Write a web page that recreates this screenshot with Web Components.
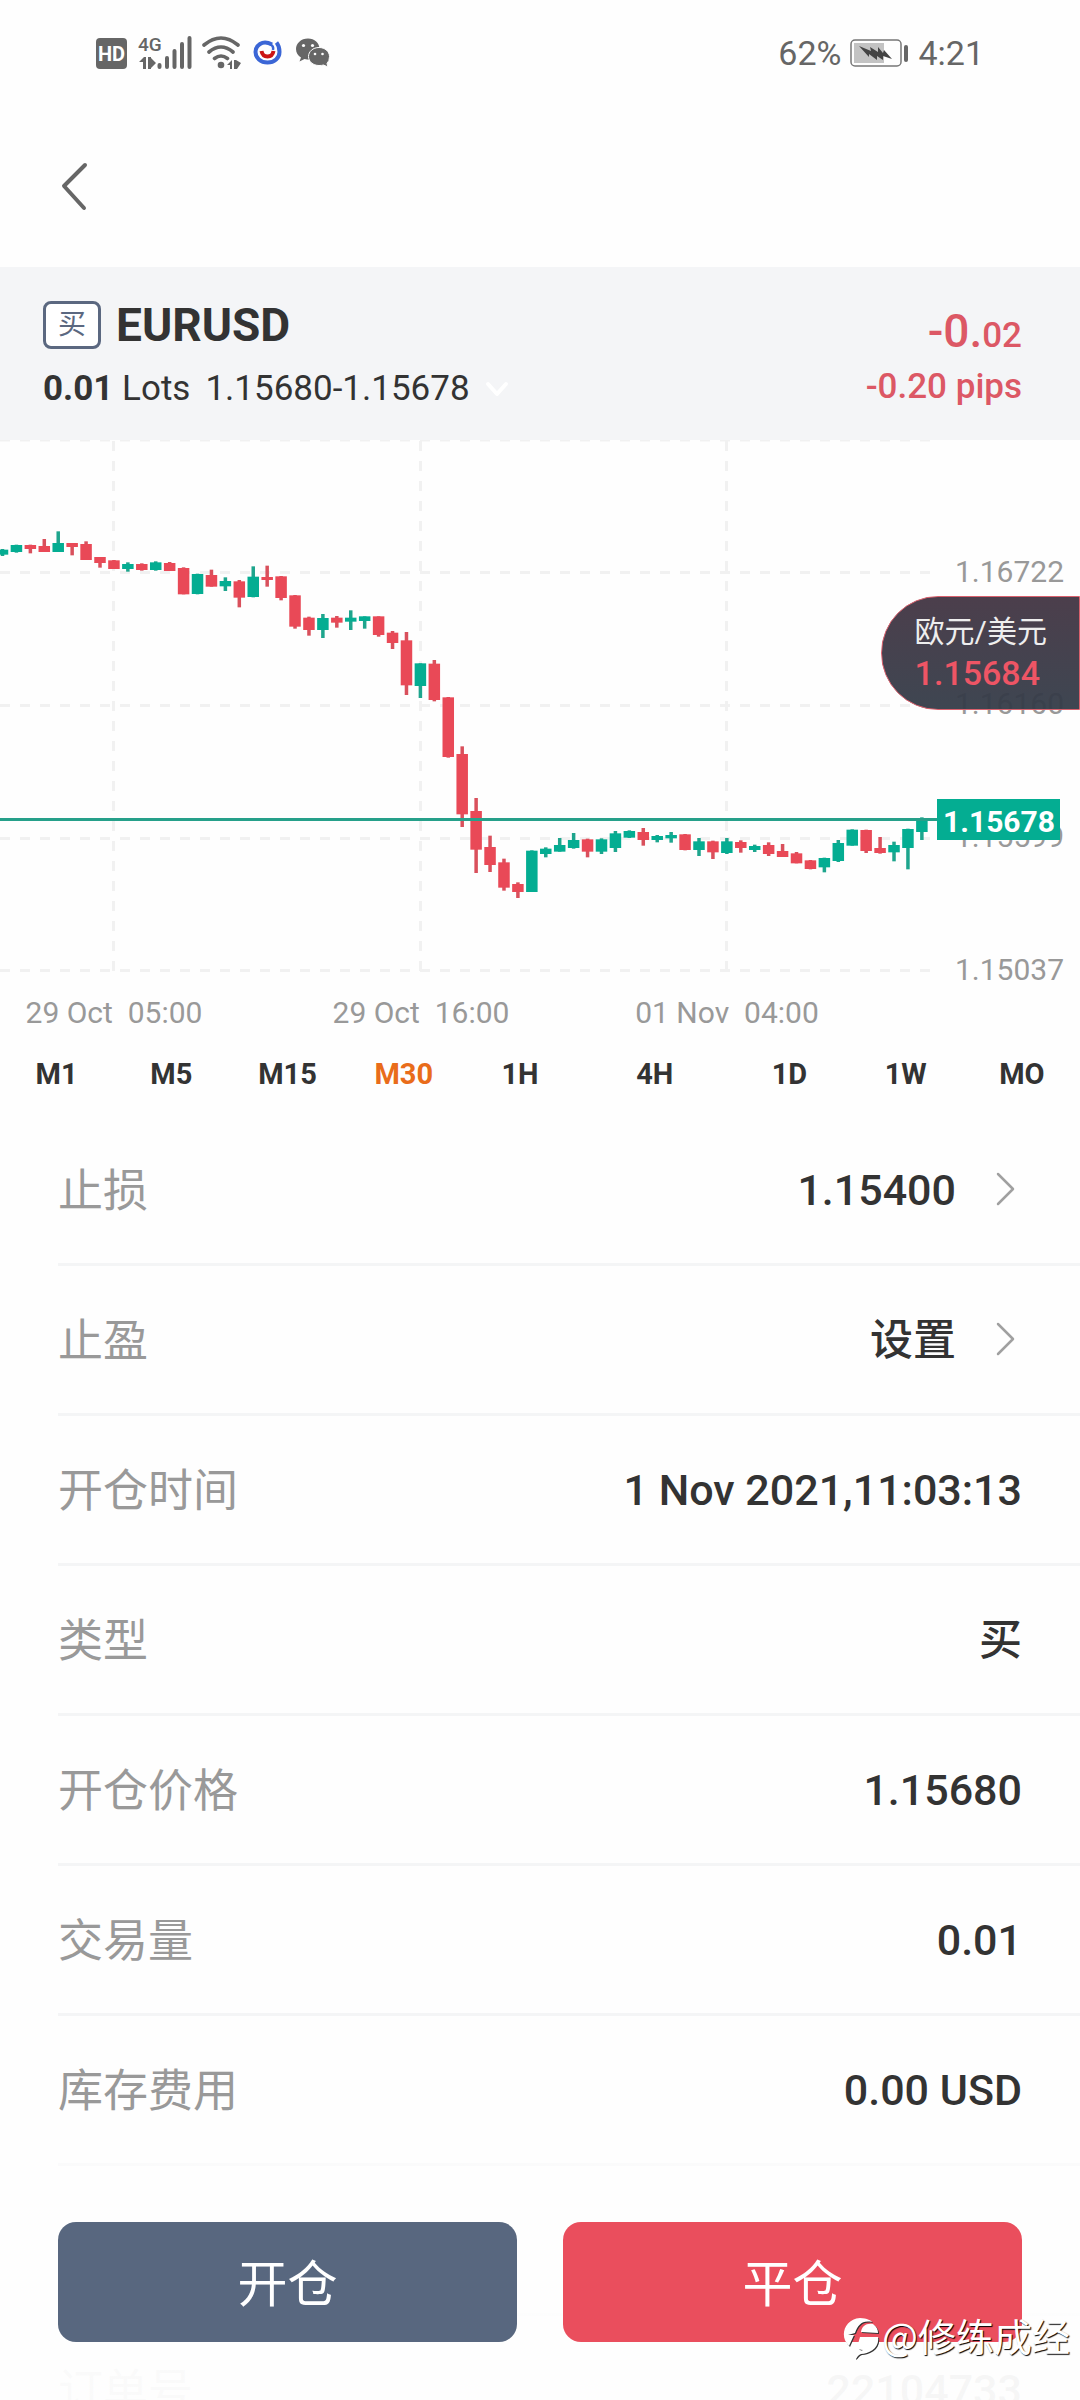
<!DOCTYPE html>
<html lang="zh-CN">
<head>
<meta charset="utf-8">
<meta name="viewport" content="width=device-width, initial-scale=1">
<title>EURUSD</title>
<style>
  html, body { margin: 0; height: 100%; }
  body {
    background: #fefefe; color: #333; overflow: hidden;
    font-family: Roboto, "Noto Sans CJK SC", sans-serif;
  }
</style>
</head>
<body>
<position-page></position-page>

<template id="status-bar">
  <style>
    :host { box-sizing: border-box; display: flex; align-items: center; justify-content: space-between; height: 107px; padding: 0 96px 2px 95px; color: #666; font-size: 34px; line-height: 40px; }
    div { display: flex; align-items: center; gap: 9px; }
    svg { display: block; fill: #666; }
  </style>
  <div>
    <svg width="236" height="36" viewBox="95 35 236 36" font-family="Roboto, sans-serif">
      <rect x="96" y="38" width="31" height="31" rx="4"/>
      <text x="111.5" y="60.500" font-size="20" font-weight="700" fill="#fff" text-anchor="middle">HD</text>
      <text x="138" y="51" font-size="19" font-weight="500" font-family="Roboto, sans-serif">4G</text>
      <path d="M139 62l5-5h2v12h-3v-7zM148 57h3v12h-3zM151 58l5 5-5 5z"/>
      <g stroke="#666" stroke-width="4" stroke-linecap="round">
        <path d="M159.500 65v2M167 58v9M174.500 51v16M182 44v23M189.500 38v29"/>
      </g>
      <g fill="none" stroke="#666" stroke-width="3.600" stroke-linecap="round">
        <path d="M204 45q17-14 34 0M209 52q12-10 24 0M214.500 58.500q6.500-5 13 0"/>
      </g>
      <circle cx="221" cy="65" r="3.300"/>
      <path d="M227 65l5-5v9h-2v-4zM234 60h2v9h-2zM236 60l5 3-4 6h-1z"/>
      <g fill="none" stroke="#3b66d6" stroke-width="4">
        <path d="M272 44.500C262 39 255.500 46 255.500 52s5 10.500 12 10.500 12-4.500 12-10.500q0-6-3-9.500"/>
        <path d="M270 44q4 2 3 6" stroke-width="2.500"/>
        <path d="M261.500 51q1 5.500 6 5.500t6-5.500" stroke="#cb1414"/>
      </g>
      <path d="M308 38.500c-7 0-12 5-12 10.500 0 4 2 6.500 5 8.500l-1.500 4 5-2.500q4 1 7 .5c6-1 8-6 8-10.500 0-6-5-10.500-11.500-10.500z"/>
      <path d="M319 47.500c-6 0-10.500 4-10.500 9s4.500 9 10.500 9q3 0 4.500-.5l4.500 2-1-3.500q2.500-2.500 2.500-7c0-5-4.500-9-10.500-9z" stroke="#fefefe" stroke-width="1"/>
      <g fill="#fefefe"><circle cx="303.500" cy="45.500" r="1.600"/><circle cx="312.500" cy="45.500" r="1.600"/><circle cx="315" cy="54" r="1.300"/><circle cx="322.500" cy="54" r="1.300"/></g>
    </svg>
  </div>
  <div>
    <span>62%</span>
    <svg width="59" height="28" viewBox="0 0 59 28">
      <rect x="1" y="1" width="50" height="26" rx="4" fill="none" stroke="#777" stroke-width="1.500"/>
      <path d="M4 4h30v20H4z" fill="#c3c3c3"/>
      <path d="M9 7l12 5-1-4 8 5v-5l5 6 1-3 8 9-9-3v4l-6-4v4l-8-6v3z" fill="#444"/>
      <rect x="54" y="6" width="4" height="17" rx="2"/>
    </svg>
    <span>4:21</span>
  </div>
</template>

<template id="nav-bar">
  <style>
    :host { display: flex; align-items: center; height: 160px; padding: 0 48px; }
    button { border: 0; background: none; padding: 12px; cursor: pointer; }
    svg { display: block; }
  </style>
  <button type="button" aria-label="返回">
    <svg width="30" height="50" viewBox="0 0 30 50" fill="none" stroke="#666" stroke-width="4" stroke-linecap="round" stroke-linejoin="round"><path d="M25 3L4 24l20 22"/></svg>
  </button>
</template>

<template id="position-header">
  <style>
    :host { display: flex; justify-content: space-between; background: #f4f5f7; padding: 34px 58px 31px 43px; }
    .left { display: flex; flex-direction: column; gap: 20px; }
    .right { display: flex; flex-direction: column; gap: 12px; padding-top: 6px; text-align: right; color: #dc5865; font-weight: 500; }
    .name { display: flex; align-items: center; gap: 15px; height: 48px; }
    .side { box-sizing: border-box; width: 58px; height: 48px; border: 3px solid #5b6880; border-radius: 8px; background: #fff; color: #5b6880; font-size: 28px; line-height: 42px; text-align: center; }
    h1 { margin: 0; font-size: 46px; line-height: 48px; font-weight: 700; }
    .lots { display: flex; align-items: center; height: 40px; font-size: 35px; line-height: 40px; gap: 15px; white-space: nowrap; }
    .pl { height: 48px; font-size: 46px; line-height: 48px; }
    .pl small { font-size: 35px; line-height: 40px; }
    .pips { font-size: 35px; line-height: 40px; }
    svg { display: block; }
  </style>
  <div class="left">
    <div class="name"><span class="side">买</span><h1>EURUSD</h1></div>
    <div class="lots"><span><b>0.01</b> Lots</span><span>1.15680-1.15678</span>
      <svg width="24" height="18" viewBox="0 0 24 18" fill="none" stroke="#fff" stroke-width="4" stroke-linecap="round" stroke-linejoin="round"><path d="M3 4l9 10 9-10"/></svg></div>
  </div>
  <div class="right">
    <div class="pl">-0.<small>02</small></div>
    <div class="pips">-0.20 pips</div>
  </div>
</template>

<template id="price-chart">
  <style>
    :host { display: block; position: relative; }
    svg { display: block; width: 100%; height: auto; }
    .axis { font-size: 30px; fill: #999; }
    .pill {
      position: absolute; right: 0; top: 156px; box-sizing: border-box; padding: 16px 32px 14px 33px;
      border: 1px solid #d9606c; border-radius: 57px 0 0 57px;
      background: linear-gradient(rgba(66,52,66,.95), rgba(52,60,72,.95));
      color: #eee; font-size: 30px; line-height: 38px;
    }
    .pill strong { display: block; font-size: 34px; line-height: 44px; font-weight: 500; color: #ee5565; }
  </style>
  <svg viewBox="0 0 1080 592" role="img" aria-label="EURUSD M30">
    <g stroke="#f1f1f1" stroke-width="3" stroke-dasharray="10 10">
      <path d="M0 0H930M0 132.500H930M0 265.500H930M0 398.500H930M0 530.500H930M113.500 1V532M420.500 1V532M726.500 1V532"/>
    </g>
    <g class="axis" text-anchor="end">
      <text x="1064" y="142">1.16722</text>
      <text x="1064" y="274">1.16160</text>
      <text x="1064" y="407">1.15599</text>
      <text x="1064" y="540">1.15037</text>
    </g>
    <g id="candles"></g>
    <path d="M0 379.500H938" stroke="#26a08a" stroke-width="3"/>
    <rect x="937" y="359" width="123" height="41" fill="#04ad92"/>
    <text x="999" y="392" font-size="30" font-weight="700" fill="#fff" text-anchor="middle">1.15678</text>
    <g class="axis" text-anchor="middle">
      <text x="114" y="583">29 Oct&#160; 05:00</text>
      <text x="421" y="583">29 Oct&#160; 16:00</text>
      <text x="727" y="583">01 Nov&#160; 04:00</text>
    </g>
  </svg>
  <div class="pill">欧元/美元<strong>1.15684</strong></div>
</template>

<template id="period-tabs">
  <style>
    :host { display: grid; grid-template-columns: 113fr repeat(4, 116fr) 153fr repeat(3, 116fr); height: 84px; }
    button { border: 0; padding: 0; background: none; color: #333; font: 700 29px/40px Roboto, sans-serif; cursor: pointer; }
    button[aria-pressed="true"] { color: #e96c1a; }
  </style>
</template>

<template id="detail-row">
  <style>
    :host { display: flex; align-items: center; justify-content: space-between; box-sizing: border-box; height: 150px; margin-left: 58px; padding-right: 58px; border-bottom: 3px solid #f4f5f6; line-height: 60px; }
    .label { padding-top: 4px; color: #999; font-size: 45px; }
    .value { display: flex; align-items: center; gap: 38px; color: #333; font-size: 43px; font-weight: 500; }
    svg { display: none; }
    :host([link]) svg { display: block; }
  </style>
  <span class="label"><slot name="label"></slot></span>
  <span class="value"><slot></slot>
    <svg width="28" height="36" viewBox="0 0 28 36" fill="none" stroke="#a0a0a0" stroke-width="2.500" stroke-linecap="round" stroke-linejoin="round"><path d="M4 2l15 15L4 32"/></svg>
  </span>
</template>

<template id="action-bar">
  <style>
    :host { position: absolute; left: 0; right: 0; bottom: 0; display: flex; gap: 46px; padding: 92px 58px 58px; background: linear-gradient(rgba(254,254,254,0), rgba(254,254,254,.6) 30px, rgba(254,254,254,.96) 220px); }
    button { flex: 1; height: 120px; padding: 6px 0 0; border: 0; border-radius: 18px; background: #58677f; color: #fff; font: 400 50px/60px Roboto, "Noto Sans CJK SC", sans-serif; cursor: pointer; }
    .close { background: #ea4e5d; }
  </style>
  <button type="button">开仓</button>
  <button type="button" class="close">平仓</button>
</template>

<template id="user-mark">
  <style>
    :host { position: absolute; right: 10px; bottom: 40px; display: flex; align-items: center; gap: 2px; color: #fff; font: 400 38px/50px "Noto Sans CJK SC", sans-serif; text-shadow: 1px 1px 1px #000; }
    svg { display: block; margin-top: 6px; filter: drop-shadow(1px 1px 0 #333); }
  </style>
  <svg width="37" height="42" viewBox="0 0 37 42" fill="#fff">
    <path d="M6 29C-4 20 1 2 17 1c7 0 12 3 12 4-10-2-14 3-17 11l-7 2h6z"/>
    <path d="M18 15c1-6 5-9 12-8 4 3 5 6 5 9zM17 20h18c2 11-9 17-17 17-3 1-4 4-6 5 1-6 4-7 8-9-4 0-6-2-5-6z"/>
  </svg>
  <span>@修练成经</span>
</template>

<template id="position-page">
  <style>
    :host { display: block; position: relative; height: 100%; overflow: hidden; }
  </style>
  <status-bar></status-bar>
  <nav-bar></nav-bar>
  <position-header></position-header>
  <price-chart></price-chart>
  <period-tabs></period-tabs>
  <main>
    <detail-row link><span slot="label">止损</span>1.15400</detail-row>
    <detail-row link><span slot="label">止盈</span>设置</detail-row>
    <detail-row><span slot="label">开仓时间</span>1 Nov 2021,11:03:13</detail-row>
    <detail-row><span slot="label">类型</span>买</detail-row>
    <detail-row><span slot="label">开仓价格</span>1.15680</detail-row>
    <detail-row><span slot="label">交易量</span>0.01</detail-row>
    <detail-row><span slot="label">库存费用</span>0.00 USD</detail-row>
    <detail-row></detail-row>
    <detail-row><span slot="label">订单号</span>22104733</detail-row>
  </main>
  <action-bar></action-bar>
  <user-mark></user-mark>
</template>

<script>
  class TemplateElement extends HTMLElement {
    constructor() {
      super();
      this.attachShadow({ mode: 'open' })
        .append(document.getElementById(this.localName).content.cloneNode(true));
    }
  }
  for (const name of ['status-bar', 'nav-bar', 'position-header', 'detail-row', 'action-bar', 'user-mark']) {
    customElements.define(name, class extends TemplateElement {});
  }

  // Candles: up (1) or down (0), wick top, wick bottom, body top, body bottom; thirds of a unit from `base`.
  const SERIES = [
    { base: 60, bars: [
      [1,147,168,149,164],[1,134,158,135,156],[0,134,160,135,147],[0,117,156,138,156],[1,94,156,129,156],
      [0,129,166,129,141],[0,124,180,132,180],[0,171,203,171,189],[0,180,207,181,207],[1,187,215,192,207],
      [0,190,212,192,210],[1,184,212,187,210],[0,186,213,189,213],[0,202,283,204,283],[1,221,283,222,282],
      [0,209,260,225,260],[1,232,273,243,259],[0,240,322,244,293],[1,199,292,230,291],[0,197,260,231,240],
      [0,228,301,229,294],[0,285,386,286,380],[0,350,407,353,390],[1,342,414,354,390],[0,348,383,353,368],
      [1,331,390,353,365]] },
    { base: 140, bars: [
      [1,109,146,109,123],[0,109,170,109,165],[0,153,207,158,189],[0,156,345,181,316],[1,250,354,250,318],
      [0,240,364,251,360],[0,351,533,352,531],[0,499,741,522,703],[0,654,879,693,809],[0,767,876,801,855],
      [0,836,932,847,923],[0,907,954,912,936],[1,811,936,812,936],[1,802,832,806,822],[1,774,815,795,815],
      [1,759,806,780,804],[0,776,832,778,815],[1,775,822,778,815],[1,753,816,760,804],[1,751,774,753,773],
      [0,744,797,756,780],[1,765,787,768,780]] },
    { base: 340, bars: [
      [1,156,188,165,175],[0,162,211,163,210],[1,174,228,184,210],[0,182,237,184,217],[1,174,222,184,219],
      [0,181,218,186,204],[1,194,216,198,210],[0,187,228,195,222],[0,192,231,213,231],[0,216,250,220,250],
      [0,240,268,241,267],[1,233,277,234,262],[1,180,246,189,243],[1,148,197,149,197],[0,149,219,150,213],
      [0,171,221,204,219],[1,185,244,195,217],[1,146,268,147,204],[1,112,180,118,156]] }
  ];
  customElements.define('price-chart', class extends TemplateElement {
    constructor() {
      super();
      const layer = this.shadowRoot.getElementById('candles');
      const NS = 'http://www.w3.org/2000/svg';
      const rect = (x, y, w, h, fill) => {
        const r = document.createElementNS(NS, 'rect');
        for (const [k, v] of Object.entries({ x, y, width: w, height: h, fill })) r.setAttribute(k, v);
        layer.append(r);
      };
      let i = 0;
      for (const { base, bars } of SERIES) {
        for (const [up, high, low, top, bottom] of bars) {
          const cx = 2.5 + 13.93 * i++;
          rect(cx - 1.75, base + high / 3, 3.5, (low - high) / 3, up ? '#1ea58d' : '#d9505c');
          rect(cx - 5.75, base + top / 3, 11.5, (bottom - top) / 3, up ? '#04ad92' : '#e94957');
        }
      }
    }
  });

  customElements.define('period-tabs', class extends TemplateElement {
    constructor() {
      super();
      for (const label of ['M1', 'M5', 'M15', 'M30', '1H', '4H', '1D', '1W', 'MO']) {
        const b = document.createElement('button');
        b.type = 'button';
        b.textContent = label;
        b.setAttribute('aria-pressed', label === 'M30');
        this.shadowRoot.append(b);
      }
    }
  });

  customElements.define('position-page', class extends TemplateElement {});
</script>
</body>
</html>
